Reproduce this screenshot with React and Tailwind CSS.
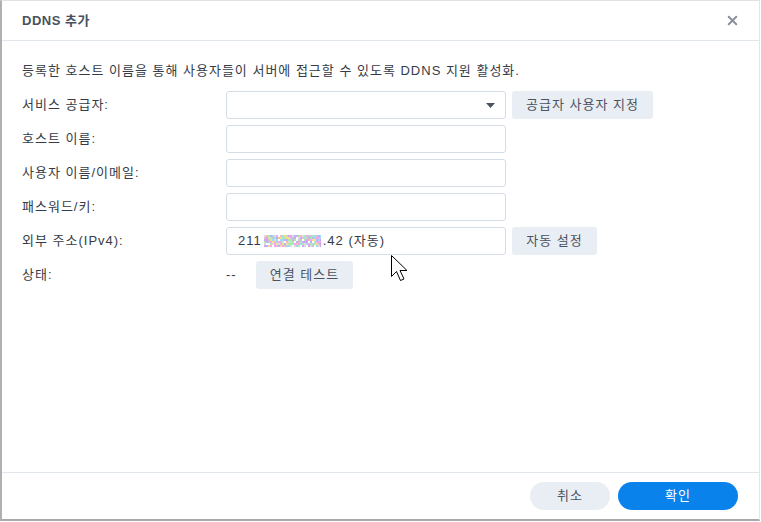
import React from "react";
import { X } from "lucide-react";

const font = { fontFamily: '"Liberation Sans", "Noto Sans CJK KR", sans-serif' };

// deterministic noise for the masked part of the ip address
function Noise() {
    const colors = ["#f2a8ee", "#a9ecbc", "#b9b4f5", "#f5df90", "#9fdcf2", "#dcdcdc", "#f5b9b9", "#cda6f3", "#b4e6a4", "#ffffff", "#c8c8c8"];
    let seed = 7;
    const rnd = () => { seed = (seed * 9301 + 49297) % 233280; return seed / 233280; };
    const cells = [];
    for (let y = 0; y < 12; y += 2) {
        for (let x = 0; x < 57; x += 2) {
            cells.push(<rect key={`${x}-${y}`} x={x} y={y} width="2" height="2" fill={colors[Math.floor(rnd() * colors.length)]} />);
        }
    }
    return <svg width="57" height="12" className="inline-block align-[-1px] mx-[2px]">{cells}</svg>;
}

function Field({ children }) {
    return (
        <div className="w-[280px] h-[28px] border border-[#d5dde6] rounded-[3px] bg-white flex items-center pl-[11px] pr-[12px] text-[13px] tracking-[1px] text-[#353c47]">
            {children}
        </div>
    );
}

function GrayBtn({ children, w }) {
    return (
        <button className={`h-[28px] ${w} bg-[#e9eef4] rounded-[3px] text-[13px] tracking-[1px] text-[#4a5362] flex items-center justify-center`}>{children}</button>
    );
}

export default function App() {
    const rows = [
        { label: "서비스 공급자:", field: <Field><span className="flex-1"></span><svg width="9" height="5" viewBox="0 0 9 5" className="mr-[-2px]"><path d="M0 0h9L4.5 5z" fill="#4a5362" /></svg></Field>, extra: <GrayBtn w="w-[141px]">공급자 사용자 지정</GrayBtn> },
        { label: "호스트 이름:", field: <Field /> },
        { label: "사용자 이름/이메일:", field: <Field /> },
        { label: "패스워드/키:", field: <Field /> },
        { label: "외부 주소(IPv4):", field: <Field><span>211</span><Noise /><span>.42 (자동)</span></Field>, extra: <GrayBtn w="w-[85px]">자동 설정</GrayBtn> },
    ];

    return (
        <div className="w-[761px] h-[522px] bg-white relative" style={font}>
            <div className="w-[760px] h-[521px] flex flex-col border-l-2 border-b-2 border-t border-r border-l-[#b0b0b0] border-b-[#a9a9a9] border-t-[#e2e2e2] border-r-[#e6e6e6] bg-white">
                <div className="h-[40px] shrink-0 flex items-center justify-between pl-[20px] pr-[19px] border-b border-[#e1e6ec]">
                    <div className="text-[13px] font-bold tracking-[0.5px] text-[#4a5160]">DDNS 추가</div>
                    <X className="w-[15px] h-[15px] text-[#8a9099]" strokeWidth={3.2} />
                </div>

                <div className="flex-1 px-[20px] pt-[20px]">
                    <p className="text-[13px] tracking-[1px] text-[#353c47] leading-[20px] mb-[10px]">등록한 호스트 이름을 통해 사용자들이 서버에 접근할 수 있도록 DDNS 지원 활성화.</p>
                    <div className="flex flex-col gap-[6px]">
                        {rows.map((r) => (
                            <div key={r.label} className="flex items-center">
                                <div className="w-[204px] text-[13px] tracking-[1px] text-[#353c47]">{r.label}</div>
                                {r.field}
                                {r.extra && <div className="ml-[6px]">{r.extra}</div>}
                            </div>
                        ))}
                        <div className="flex items-center">
                            <div className="w-[204px] text-[13px] tracking-[1px] text-[#353c47]">상태:</div>
                            <span className="text-[13px] tracking-[1px] text-[#353c47] w-[30px]">--</span>
                            <GrayBtn w="w-[97px]">연결 테스트</GrayBtn>
                        </div>
                    </div>
                </div>

                <div className="h-[47px] shrink-0 border-t border-[#e1e6ec] flex items-center justify-end gap-[8px] pr-[21px]">
                    <button className="w-[80px] h-[28px] rounded-full bg-[#e9eef4] text-[13px] tracking-[1px] text-[#4a5362]">취소</button>
                    <button className="w-[120px] h-[28px] rounded-full bg-[#0a82ec] text-[13px] tracking-[1px] text-white">확인</button>
                </div>
            </div>

            <svg className="absolute left-[390px] top-[254px]" width="22" height="32" viewBox="0 0 22 32">
                <path d="M1.5 1.5v21l5-5 4 9 3.5-1.5-4-8.5h7z" fill="#fff" stroke="#000" strokeWidth="1" strokeLinejoin="miter" />
            </svg>
        </div>
    );
}
